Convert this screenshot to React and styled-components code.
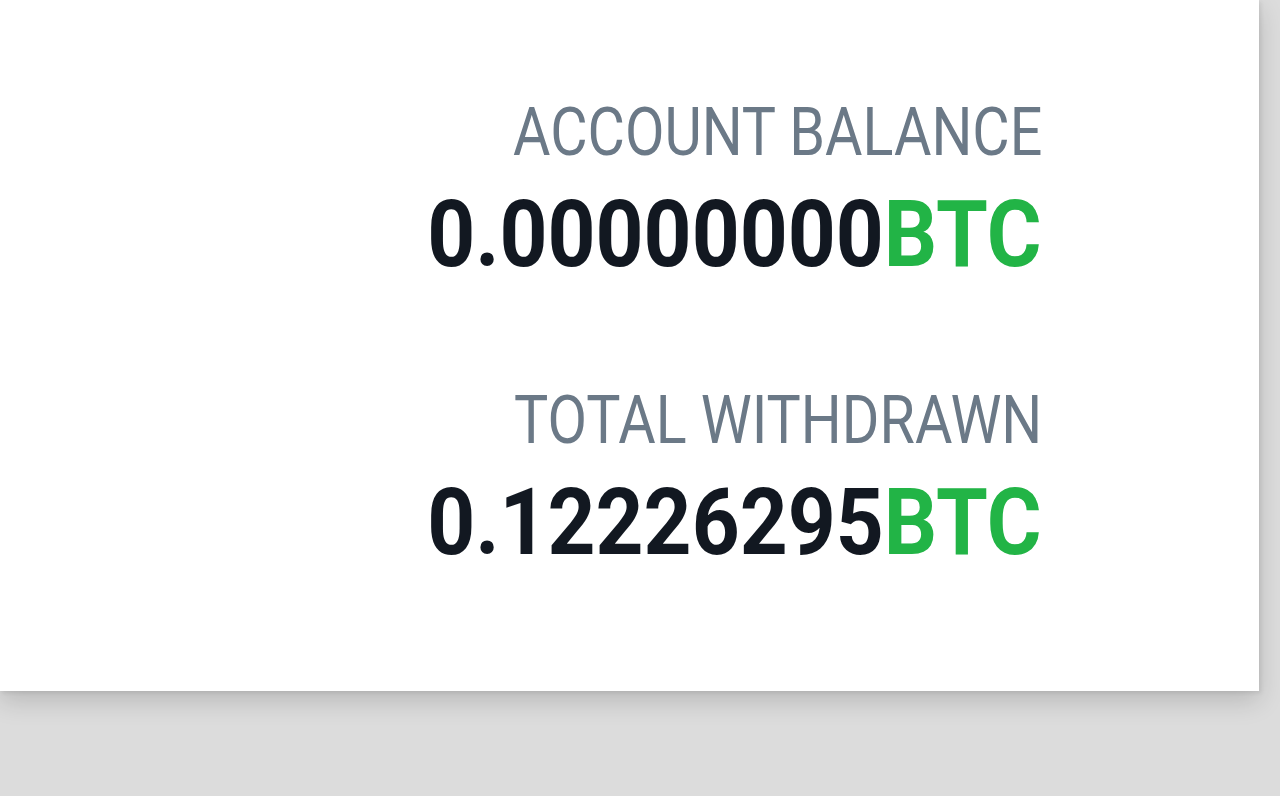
import React from "react";
import styled, { createGlobalStyle } from "styled-components";

const GlobalStyle = createGlobalStyle`
  html, body {
    margin: 0;
    padding: 0;
    background: #dcdcdc;
    font-family: Roboto, "Liberation Sans", sans-serif;
  }
`;

const Page = styled.main`
  width: 1280px;
  height: 796px;
  overflow: hidden;
  background: #dcdcdc;
`;

const Card = styled.section`
  width: 1259px;
  height: 691px;
  background: #ffffff;
  box-shadow: 0 10px 24px rgba(0, 0, 0, 0.16), 2px 2px 4px rgba(0, 0, 0, 0.08);
  display: flex;
  flex-direction: column;
  align-items: flex-end;
  padding: 100px 217px 0 0;
  box-sizing: border-box;
`;

const Stat = styled.div`
  display: flex;
  flex-direction: column;
  align-items: flex-end;
  margin-bottom: ${({ gap }) => gap || 0}px;
`;

const Label = styled.div`
  font-size: 66px;
  line-height: 1;
  font-weight: 400;
  color: #6b7987;
  transform: scaleX(0.87);
  transform-origin: right center;
`;

const Value = styled.div`
  margin-top: 22px;
  font-size: 93px;
  line-height: 1;
  font-weight: 700;
  color: #121821;
  white-space: nowrap;
  transform: scaleX(0.9);
  transform-origin: right center;
`;

const Unit = styled.span`
  color: #22b446;
`;

const stats = [
  { label: "ACCOUNT BALANCE", value: "0.00000000" },
  { label: "TOTAL WITHDRAWN", value: "0.12226295" },
];

export default function App() {
  return (
    <Page>
      <GlobalStyle />
      <Card>
        {stats.map((s, i) => (
          <Stat key={s.label} gap={i === 0 ? 107 : 0}>
            <Label>{s.label}</Label>
            <Value>
              {s.value}
              <Unit>BTC</Unit>
            </Value>
          </Stat>
        ))}
      </Card>
    </Page>
  );
}
